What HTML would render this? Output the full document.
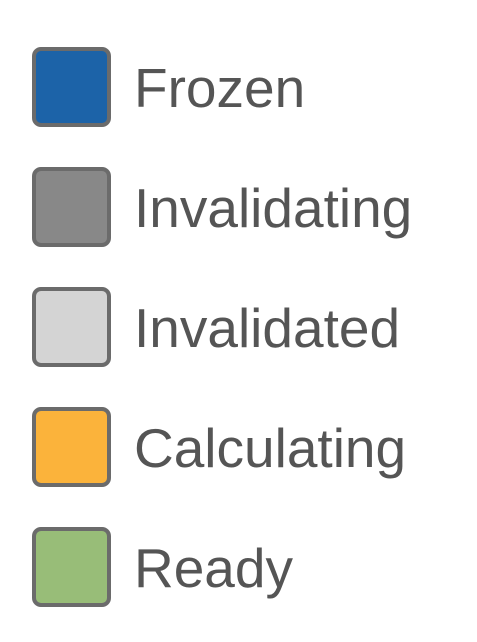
<!DOCTYPE html>
<html><head><style>
body{margin:0;width:477px;height:642px;background:#fff;position:relative;overflow:hidden;font-family:"Liberation Sans",sans-serif;}
.s{position:absolute;left:32px;width:71px;height:72px;border:4px solid #6b6b6b;border-radius:9px;}
.t{position:absolute;left:134px;font-size:55px;line-height:55px;color:#555;white-space:nowrap;}
</style></head><body>
<div class="s" style="top:47px;background:#1c63a8"></div><div class="t" style="top:61px">Frozen</div>
<div class="s" style="top:167px;background:#888"></div><div class="t" style="top:181px">Invalidating</div>
<div class="s" style="top:287px;background:#d4d4d4"></div><div class="t" style="top:301px">Invalidated</div>
<div class="s" style="top:407px;background:#fbb33b"></div><div class="t" style="top:421px">Calculating</div>
<div class="s" style="top:527px;background:#98bd78"></div><div class="t" style="top:541px">Ready</div>
</body></html>
